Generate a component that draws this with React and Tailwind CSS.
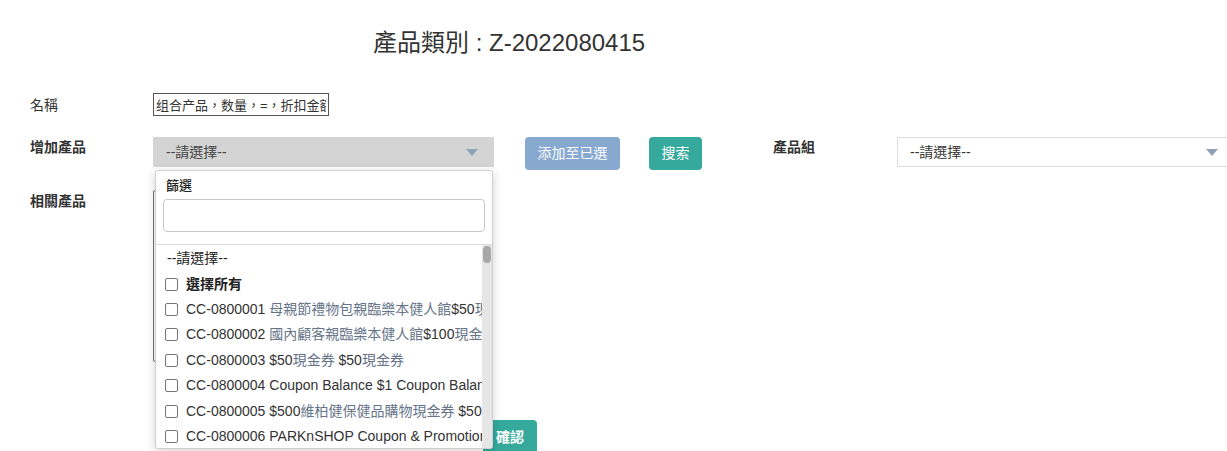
import React from "react";

const items = [
  { code: "CC-0800001", name: "母親節禮物包親臨樂本健人館$50現金券 母親節禮物包" },
  { code: "CC-0800002", name: "國內顧客親臨樂本健人館$100現金券 國內顧客" },
  { code: "CC-0800003", name: "$50現金券 $50現金券" },
  { code: "CC-0800004", name: "Coupon Balance $1 Coupon Balance $1" },
  { code: "CC-0800005", name: "$500維柏健保健品購物現金券 $500維柏健保健品" },
  { code: "CC-0800006", name: "PARKnSHOP Coupon & Promotion Code" },
];

// CJK runs render lighter in the reference
const splitCjk = (s) => s.split(/([\u3400-\u9fff]+)/).filter(Boolean);

const Arrow = () => (
  <svg width="12" height="7" viewBox="0 0 12 7" className="shrink-0">
    <polygon points="0,0 12,0 6,7" fill="#8ea3bb" />
  </svg>
);

const Check = () => (
  <input
    type="checkbox"
    className="appearance-none w-[13px] h-[13px] border border-[#767676] rounded-[2px] bg-white shrink-0 m-0"
  />
);

export default function App() {
  return (
    <div
      className="w-full h-[451px] overflow-hidden bg-white text-[#333] text-[14px]"
      style={{ fontFamily: '"Liberation Sans", "Noto Sans CJK TC", sans-serif' }}
    >
      <div className="pt-[28px] pl-[373px] text-[24px] leading-[29px] text-[#333]">
        產品類別 : Z-2022080415
      </div>

      <div className="px-[30px]">
        {/* 名稱 */}
        <div className="mt-[36px] flex items-center">
          <div className="w-[123px] leading-[20px]">名稱</div>
          <input
            readOnly
            value="组合产品，数量，=，折扣金额"
            className="w-[176px] h-[23px] border border-[#555] px-[2px] text-[13px] text-[#333] outline-none"
          />
        </div>

        {/* 增加產品 */}
        <div className="mt-[21px] flex items-start whitespace-nowrap">
          <div className="w-[123px] shrink-0 leading-[20px] font-bold">增加產品</div>
          <div className="relative w-[341px] shrink-0">
            <div className="h-[30px] bg-[#d4d4d4] flex items-center justify-between pl-[13px] pr-[16px] text-[#444]">
              <span>--請選擇--</span>
              <Arrow />
            </div>

            {/* dropdown */}
            <div className="absolute top-[33px] left-[2px] w-[338px] h-[279px] z-10 bg-white border border-[#cfcfcf] rounded-[3px] shadow-[0_2px_10px_rgba(0,0,0,0.18)] flex flex-col overflow-hidden">
              <div className="px-[7px] pt-[6px] pb-[12px] border-b border-[#dcdcdc]">
                <div className="pl-[3px] text-[13px] leading-[18px] font-medium text-[#222]">篩選</div>
                <input className="mt-[4px] w-full h-[33px] border border-[#c8c8c8] rounded-[4px] outline-none" />
              </div>
              <div className="flex flex-1 min-h-0">
                <div className="flex-1 min-w-0 overflow-hidden pt-[1px]">
                  <div className="h-[25.4px] flex items-center pl-[11px] text-[#222]">--請選擇--</div>
                  <div className="h-[25.4px] flex items-center pl-[9px] gap-[8px]">
                    <Check />
                    <span className="font-bold text-[#222]">選擇所有</span>
                  </div>
                  {items.map((it) => (
                    <div key={it.code} className="h-[25.4px] flex items-center pl-[9px] gap-[8px] overflow-hidden">
                      <Check />
                      <span className="whitespace-nowrap text-[#333]">
                        {it.code}{" "}
                        {splitCjk(it.name).map((part, i) =>
                          /[\u3400-\u9fff]/.test(part) ? (
                            <span key={i} className="text-[#66748a]">{part}</span>
                          ) : (
                            <span key={i}>{part}</span>
                          )
                        )}
                      </span>
                    </div>
                  ))}
                </div>
                <div className="w-[10px] shrink-0 bg-[#e6e6e6] flex justify-center pt-[1px]">
                  <div className="w-[8px] h-[17px] rounded-full bg-[#a8a8a8]" />
                </div>
              </div>
            </div>
          </div>
          <button className="ml-[31px] w-[95px] h-[33px] rounded-[4px] bg-[#87a9cf] text-white shrink-0">
            添加至已選
          </button>
          <button className="ml-[29px] w-[53px] h-[33px] rounded-[4px] bg-[#35a99c] text-white shrink-0">
            搜索
          </button>
          <div className="ml-[71px] w-[124px] shrink-0 leading-[20px] font-bold">產品組</div>
          <div className="w-[340px] h-[30px] shrink-0 border border-[#dcdcdc] bg-white flex items-center justify-between pl-[12px] pr-[18px] text-[#333]">
            <span>--請選擇--</span>
            <Arrow />
          </div>
        </div>

        {/* 相關產品 */}
        <div className="mt-[20px] flex items-start">
          <div className="w-[123px] shrink-0 leading-[20px] mt-[1px] font-bold">相關產品</div>
          <div className="flex flex-col items-start">
            <textarea className="w-[320px] h-[172px] border border-[#767676] rounded-[2px] resize-none outline-none" />
            <button className="mt-[58px] ml-[330px] w-[54px] h-[34px] rounded-[4px] bg-[#35a99c] text-white font-bold">
              確認
            </button>
          </div>
        </div>
      </div>
    </div>
  );
}
